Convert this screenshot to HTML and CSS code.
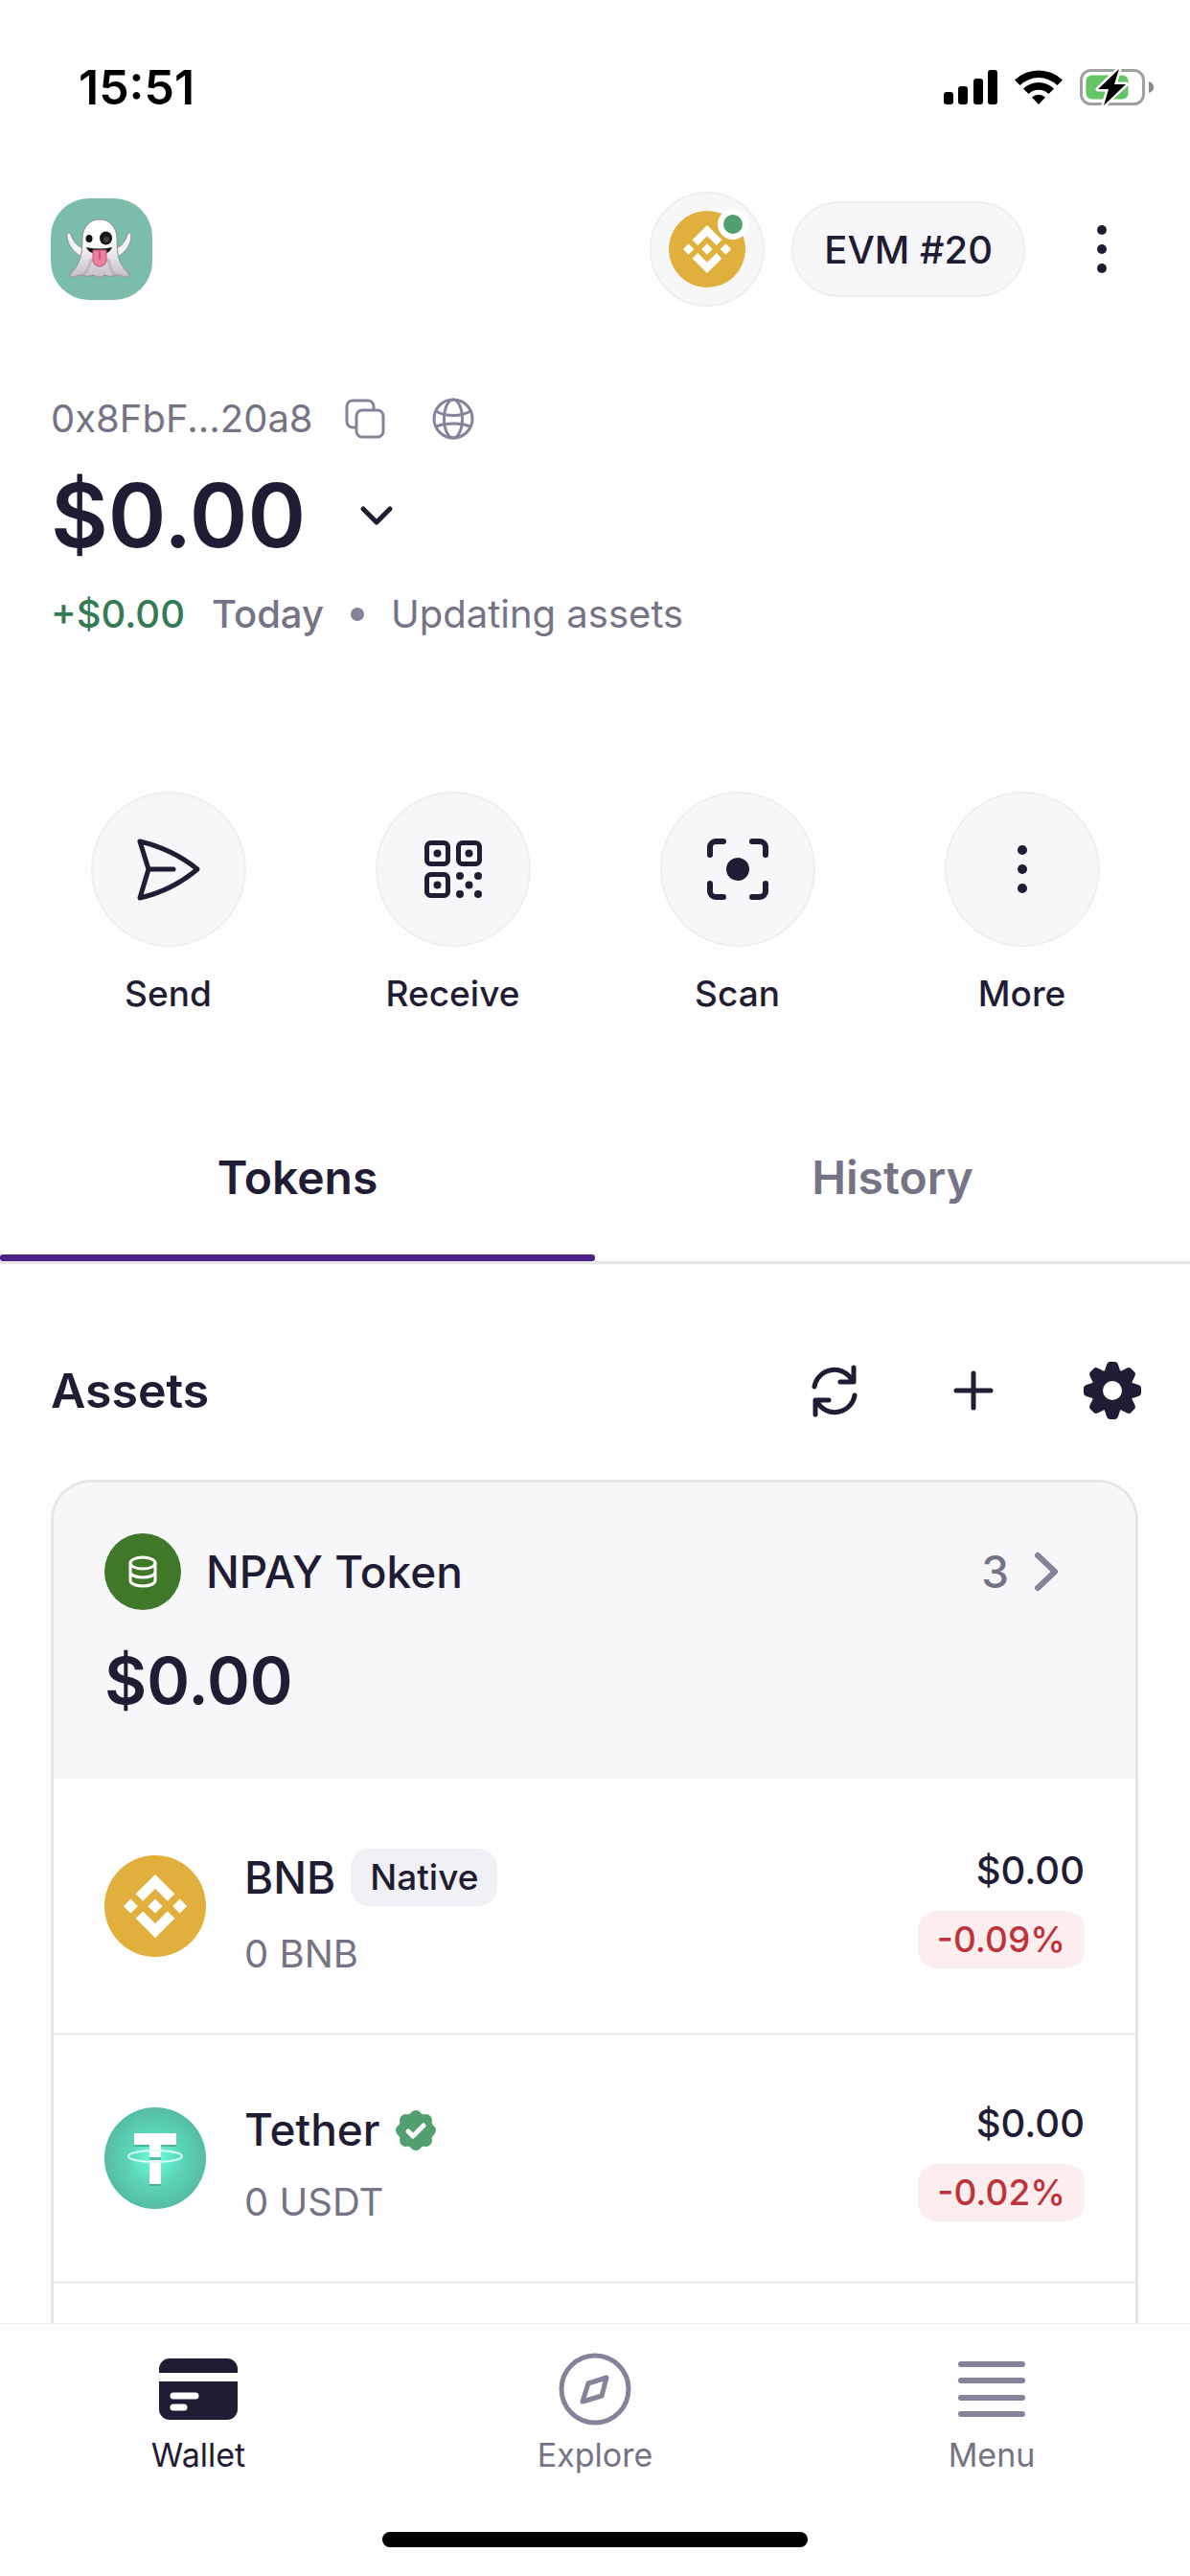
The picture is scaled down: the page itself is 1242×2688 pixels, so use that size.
FILE: index.html
```html
<!DOCTYPE html>
<html lang="en">
  <head>
    <meta charset="UTF-8" />
    <meta name="viewport" content="width=device-width, initial-scale=1.0" />
    <title>Wallet</title>
    <link rel="stylesheet" href="styles.css">
  </head>
  <body>
    <!-- shared symbols -->
    <svg class="sprite" aria-hidden="true">
      <symbol id="bnb" viewBox="0 0 32 32">
        <circle cx="16" cy="16" r="16" fill="#e0af3c" />
        <path fill="#fff" d="M12.116 14.404L16 10.52l3.886 3.886 2.26-2.26L16 6l-6.144 6.144 2.26 2.26zM6 16l2.26-2.26L10.52 16l-2.26 2.26L6 16zm6.116 1.596L16 21.48l3.886-3.886 2.26 2.259L16 26l-6.144-6.144-.003-.003 2.263-2.257zM21.48 16l2.26-2.26L26 16l-2.26 2.26L21.48 16zm-3.188-.002h.002V16L16 18.294l-2.291-2.29-.004-.004.004-.003.401-.402.195-.195L16 13.706l2.293 2.293z" />
      </symbol>
      <symbol id="dots" viewBox="0 0 60 60">
        <circle cx="30" cy="10" r="5" />
        <circle cx="30" cy="30" r="5" />
        <circle cx="30" cy="50" r="5" />
      </symbol>
    </svg>

    <div class="app">
      <div class="status-bar">
        <span class="clock">15:51</span>
        <svg width="220" height="38" viewBox="0 0 220 38" aria-hidden="true">
          <rect x="0" y="24" width="10" height="13" rx="3" />
          <rect x="15" y="18" width="10" height="19" rx="3" />
          <rect x="31" y="10" width="10" height="27" rx="3" />
          <rect x="46" y="1" width="10" height="36" rx="3" />
          <path d="M74 11.5a36 36 0 0 1 50 0l-5.5 5.5a28 28 0 0 0-39 0z" />
          <path d="M83 20.5a23 23 0 0 1 32 0l-5.5 5.5a15 15 0 0 0-21 0z" />
          <path d="M92 29.5a10 10 0 0 1 14 0L99 37z" />
          <rect x="143.5" y="1.5" width="65" height="35" rx="10" fill="none" stroke="#a0a0a0" stroke-width="3" />
          <rect x="148.5" y="6.5" width="44" height="25" rx="6" fill="#65c466" />
          <path d="M214 13c7 2 7 10 0 12z" fill="#8c8c8c" />
          <path d="M183 0L161 21h11l-5 17 23-22h-12z" stroke="#fff" stroke-width="5" paint-order="stroke" stroke-linejoin="round" />
        </svg>
      </div>

      <header class="header">
        <button class="avatar" aria-label="Account">
          <svg width="106" height="106" viewBox="0 0 106 106">
            <defs>
              <linearGradient id="ghost" x1="0" y1="0" x2="0" y2="1">
                <stop offset="0.4" stop-color="#fdfdfd" />
                <stop offset="1" stop-color="#c3bcc4" />
              </linearGradient>
            </defs>
            <g stroke="#8f8d97" stroke-width="1">
              <path fill="#f3f1f5" d="M34 62c-10-5-17-14-17-23 0-4 3-4 4-1 3 8 7 12 13 14zM68 62c10-5 16-14 16-23 0-4-3-4-4-1-3 8-6 12-12 14z" />
              <path fill="url(#ghost)" d="M51 22c11 0 18 9 18 20 0 16 1 25 12 36 2 3-1 5-4 4-5-2-8-3-12-1-4 1-6 0-9-1-3 3-8 3-11 0-4 1-6 2-9 1-4-2-7-1-11 1-3 1-6-1-4-4 10-10 12-20 12-36 0-11 7-20 18-20z" />
            </g>
            <path d="M34 80c5-5 7-11 8-17M67 80c-5-5-6-11-7-17" fill="none" stroke="#aaa2ab" stroke-width="3" opacity="0.5" />
            <ellipse cx="40" cy="42" rx="3.5" ry="4" fill="#111" />
            <ellipse cx="57.5" cy="41.5" rx="6.5" ry="7" fill="#1b1718" />
            <circle cx="58" cy="43" r="3" fill="#454045" />
            <path d="M37 51q14 3 27 0c-2 5-6 7-13 7s-12-2-14-7z" fill="#15100f" />
            <path d="M44 54h14v11a7 6 0 0 1-14 0z" fill="#ee7f9f" stroke="#b5536f" stroke-width="1" />
            <path d="M51 55v9" stroke="#c9577a" stroke-width="2" />
          </svg>
        </button>
        <div class="header-actions">
          <button class="network" aria-label="Network">
            <svg width="80" height="80"><use href="#bnb" /></svg>
            <span class="online"></span>
          </button>
          <button class="account-pill">EVM #20</button>
          <button class="menu-dots" aria-label="Options">
            <svg width="60" height="50" viewBox="0 5 60 50"><use href="#dots" width="60" height="60" /></svg>
          </button>
        </div>
      </header>

      <section class="account">
        <div class="address">
          <span>0x8FbF...20a8</span>
          <button class="icon-button" aria-label="Copy address">
            <svg width="44" height="44" viewBox="0 0 44 44" fill="none" stroke="#85839a" stroke-width="3" stroke-linejoin="round">
              <path d="M12 31H9a6 6 0 0 1-6-6V9a6 6 0 0 1 6-6h16a6 6 0 0 1 6 6v3" />
              <rect x="13" y="13" width="28" height="28" rx="6" />
            </svg>
          </button>
          <button class="icon-button" aria-label="Open explorer">
            <svg width="44" height="44" viewBox="0 0 44 44" fill="none" stroke="#85839a" stroke-width="3">
              <circle cx="22" cy="22" r="20" />
              <ellipse cx="22" cy="22" rx="9.5" ry="20" />
              <path d="M4 14c10 6 26 6 36 0M4 30c10-4 26-4 36 0" />
            </svg>
          </button>
        </div>
        <div class="balance">
          <h1>$0.00</h1>
          <button class="icon-button" aria-label="Balance details">
            <svg width="36" height="24" viewBox="0 0 36 24" fill="none" stroke="#1f1c33" stroke-width="5" stroke-linecap="round" stroke-linejoin="round">
              <path d="M4 5l14 14L32 5" />
            </svg>
          </button>
        </div>
        <div class="change">
          <strong class="gain">+$0.00</strong>
          <strong>Today</strong>
          <span class="bullet"></span>
          <span>Updating assets</span>
        </div>
      </section>

      <div class="actions">
        <button class="action">
          <span class="action-icon">
            <svg width="72" height="72" viewBox="0 0 72 72" fill="none" stroke="#1f1c33" stroke-width="5" stroke-linecap="round" stroke-linejoin="round">
              <path d="M6 7q34 8 60 29q-26 22-60 30l9-30zM15 36h26" />
            </svg>
          </span>
          Send
        </button>
        <button class="action">
          <span class="action-icon">
            <svg width="72" height="72" viewBox="0 0 72 72">
              <g fill="none" stroke="#1f1c33" stroke-width="5">
                <rect x="8.5" y="8.5" width="22" height="22" rx="4" />
                <rect x="41.5" y="8.5" width="22" height="22" rx="4" />
                <rect x="8.5" y="41.5" width="22" height="22" rx="4" />
              </g>
              <g fill="#1f1c33">
                <circle cx="19.5" cy="19.5" r="4" />
                <circle cx="52.5" cy="19.5" r="4" />
                <circle cx="19.5" cy="52.5" r="4" />
                <circle cx="43" cy="43" r="4" />
                <circle cx="62" cy="43" r="4" />
                <circle cx="52.5" cy="52.5" r="4" />
                <circle cx="43" cy="62" r="4" />
                <circle cx="62" cy="62" r="4" />
              </g>
            </svg>
          </span>
          Receive
        </button>
        <button class="action">
          <span class="action-icon">
            <svg width="72" height="72" viewBox="0 0 72 72">
              <path fill="none" stroke="#1f1c33" stroke-width="6" stroke-linecap="round" d="M21 7h-8a6 6 0 0 0-6 6v8M51 7h8a6 6 0 0 1 6 6v8M21 65h-8a6 6 0 0 1-6-6v-8M51 65h8a6 6 0 0 0 6-6v-8" />
              <circle cx="36" cy="36" r="12" fill="#1f1c33" />
            </svg>
          </span>
          Scan
        </button>
        <button class="action">
          <span class="action-icon">
            <svg width="60" height="60" fill="#1f1c33"><use href="#dots" /></svg>
          </span>
          More
        </button>
      </div>

      <div class="tabs" role="tablist">
        <button class="tab active" role="tab" aria-selected="true">Tokens</button>
        <button class="tab" role="tab" aria-selected="false">History</button>
      </div>

      <div class="assets-header">
        <h2>Assets</h2>
        <div class="tools">
          <button class="tool" aria-label="Refresh">
            <svg width="60" height="60" viewBox="0 0 60 60" fill="none" stroke="#1f1c33" stroke-width="5" stroke-linecap="round" stroke-linejoin="round">
              <path d="M9 26a21 21 0 0 1 39-7M50 6v15H36M51 35a21 21 0 0 1-39 7M10 55V40h14" />
            </svg>
          </button>
          <button class="tool" aria-label="Add token">
            <svg width="60" height="60" viewBox="0 0 60 60" stroke="#1f1c33" stroke-width="5" stroke-linecap="round">
              <path d="M30 12v36M12 30h36" />
            </svg>
          </button>
          <button class="tool" aria-label="Asset settings">
            <svg width="60" height="60" viewBox="-30 -30 60 60" fill="#1f1c33">
              <circle r="16" fill="none" stroke="#1f1c33" stroke-width="12" />
              <g id="teeth">
                <path d="M-9-18l3-9q1-3 3-3h6q2 0 3 3l3 9z" />
                <path d="M-9 18l3 9q1 3 3 3h6q2 0 3-3l3-9z" />
                <path d="M-18-9l-9 3q-3 1-3 3v6q0 2 3 3l9 3z" />
                <path d="M18-9l9 3q3 1 3 3v6q0 2-3 3l-9 3z" />
              </g>
              <use href="#teeth" transform="rotate(45)" />
            </svg>
          </button>
        </div>
      </div>

      <main class="card">
        <a class="group" href="#npay">
          <span class="group-top">
            <span class="group-icon">
              <svg width="34" height="38" viewBox="0 0 34 38" fill="none" stroke="#fff" stroke-width="3">
                <ellipse cx="17" cy="10" rx="13" ry="6" />
                <path d="M4 10v18c0 8 26 8 26 0V10M4 19c0 8 26 8 26 0" />
              </svg>
            </span>
            <span class="group-name">NPAY Token</span>
            <span class="group-count">3</span>
            <svg width="30" height="44" viewBox="0 0 30 44" fill="none" stroke="#85839a" stroke-width="6" stroke-linecap="round" stroke-linejoin="round">
              <path d="M5 5l18 17L5 39" />
            </svg>
          </span>
          <span class="group-value">$0.00</span>
        </a>
        <ul class="token-list">
          <li class="token">
            <svg width="106" height="106"><use href="#bnb" /></svg>
            <div class="token-info">
              <div class="token-name">BNB <span class="tag">Native</span></div>
              <div class="token-amount">0 BNB</div>
            </div>
            <div class="token-value">
              <span class="price">$0.00</span>
              <span class="tag loss">-0.09%</span>
            </div>
          </li>
          <li class="token">
            <svg width="106" height="106" viewBox="0 0 106 106">
              <defs>
                <radialGradient id="tether">
                  <stop offset="0" stop-color="#6fffdc" />
                  <stop offset="0.55" stop-color="#5bd3b7" />
                  <stop offset="1" stop-color="#55bda5" />
                </radialGradient>
              </defs>
              <circle cx="53" cy="53" r="53" fill="url(#tether)" />
              <path d="M31 29h44v12H59v41H47V41H31z" fill="#3c9c86" opacity="0.6" />
              <path d="M31 27h44v12H59v13H47V39H31zM47 55h12v25H47z" fill="#fff" />
              <ellipse cx="53" cy="51" rx="28" ry="6" fill="none" stroke="#d9fff5" stroke-width="2" />
            </svg>
            <div class="token-info">
              <div class="token-name">
                Tether
                <svg width="42" height="42" viewBox="-21 -21 42 42" role="img" aria-label="Verified">
                  <g fill="#529f6f">
                    <circle r="18.5" />
                    <circle cy="-14.5" r="6.5" />
                    <circle cy="14.5" r="6.5" />
                    <circle cx="-14.5" r="6.5" />
                    <circle cx="14.5" r="6.5" />
                    <circle cx="10.5" cy="10.5" r="6.5" />
                    <circle cx="-10.5" cy="10.5" r="6.5" />
                    <circle cx="10.5" cy="-10.5" r="6.5" />
                    <circle cx="-10.5" cy="-10.5" r="6.5" />
                  </g>
                  <path d="M-8 1l5 5L8-5" fill="none" stroke="#fff" stroke-width="5" stroke-linecap="round" stroke-linejoin="round" />
                </svg>
              </div>
              <div class="token-amount">0 USDT</div>
            </div>
            <div class="token-value">
              <span class="price">$0.00</span>
              <span class="tag loss">-0.02%</span>
            </div>
          </li>
        </ul>
      </main>

      <footer class="bottom">
        <nav class="bottom-nav">
          <a class="nav-item current" href="#wallet">
            <svg width="90" height="90" viewBox="0 0 90 90">
              <path fill="#1f1c33" d="M4 28v-4a11 11 0 0 1 11-11h60a11 11 0 0 1 11 11v4zM4 37h82v29a11 11 0 0 1-11 11H15A11 11 0 0 1 4 66z" />
              <path d="M19 52h23M19 64h11" stroke="#fff" stroke-width="7" stroke-linecap="round" />
            </svg>
            Wallet
          </a>
          <a class="nav-item" href="#explore">
            <svg width="90" height="90" viewBox="0 0 90 90" fill="none" stroke="#85839a" stroke-width="5" stroke-linejoin="round">
              <circle cx="45" cy="45" r="35" />
              <path d="M57 33l-5 19-20 6 6-19z" />
            </svg>
            Explore
          </a>
          <a class="nav-item" href="#menu">
            <svg width="90" height="90" viewBox="0 0 90 90" fill="none" stroke="#85839a" stroke-width="6" stroke-linecap="round">
              <path d="M13 19h64M13 36h64M13 54h64M13 71h64" />
            </svg>
            Menu
          </a>
        </nav>
        <div class="home-indicator"></div>
      </footer>
    </div>
  </body>
</html>
```

FILE: styles.css
```css
* {
  box-sizing: border-box;
}

body {
  font-family: "Inter", sans-serif;
  font-size: 40px;
  color: #1f1c33;
  background-color: #fefefe;
  margin: 0;
}

button {
  font: inherit;
  color: inherit;
  background: none;
  border: none;
  padding: 0;
  cursor: pointer;
}

a {
  color: inherit;
  text-decoration: none;
}

svg {
  display: block;
  flex-shrink: 0;
}

h1,
h2 {
  margin: 0;
  font-weight: 600;
}

.sprite {
  position: absolute;
  width: 0;
  height: 0;
}

.app {
  height: 100vh;
  display: flex;
  flex-direction: column;
  overflow: hidden;
}

/* Status bar */
.status-bar {
  display: flex;
  justify-content: space-between;
  align-items: center;
  padding: 61px 37px 60px 82px;
  line-height: 60px;
}

.clock {
  font-size: 50px;
  font-weight: 600;
  color: #000;
}

/* Header */
.header {
  display: flex;
  justify-content: space-between;
  align-items: center;
  padding: 19px 40px 0 53px;
}

.avatar {
  background-color: #7cbcab;
  border-radius: 40px;
  overflow: hidden;
}

.header-actions {
  display: flex;
  align-items: center;
  gap: 28px;
}

.network {
  position: relative;
  width: 120px;
  height: 120px;
  display: flex;
  align-items: center;
  justify-content: center;
  background-color: #f7f7fa;
  border: 2px solid #efeff2;
  border-radius: 50%;
}

.online {
  position: absolute;
  top: 16px;
  right: 15px;
  width: 32px;
  height: 32px;
  background-color: #529f6f;
  border: 6px solid #fff;
  border-radius: 50%;
}

.account-pill {
  height: 100px;
  padding: 0 32px;
  background-color: #f7f7fa;
  border: 2px solid #efeff2;
  border-radius: 50px;
  font-weight: 500;
}

.menu-dots {
  width: 104px;
  height: 104px;
  display: flex;
  align-items: center;
  justify-content: center;
  fill: #1f1c33;
}

/* Account */
.account {
  padding: 87px 53px 0;
  line-height: 60px;
  color: #757384;
}

.address {
  display: flex;
  align-items: center;
  gap: 32px;
}

.icon-button + .icon-button {
  margin-left: 16px;
}

.balance {
  display: flex;
  align-items: center;
  gap: 56px;
  margin: 16px 0 18px;
  line-height: 110px;
  color: #1f1c33;
}

.balance h1 {
  font-size: 92px;
}

.change {
  display: flex;
  align-items: center;
  gap: 28px;
}

.change strong {
  font-weight: 500;
}

.change .gain {
  color: #357a56;
}

.bullet {
  width: 14px;
  height: 14px;
  background-color: #85839a;
  border-radius: 50%;
}

/* Actions */
.actions {
  display: grid;
  grid-template-columns: repeat(4, 1fr);
  padding: 155px 27px 88px;
}

.action {
  display: flex;
  flex-direction: column;
  align-items: center;
  gap: 25px;
  font-size: 37px;
  font-weight: 500;
  line-height: 48px;
}

.action-icon {
  width: 162px;
  height: 162px;
  display: flex;
  align-items: center;
  justify-content: center;
  background-color: #f7f7fa;
  border: 2px solid #efeff2;
  border-radius: 50%;
}

/* Tabs */
.tabs {
  display: grid;
  grid-template-columns: 1fr 1fr;
  border-bottom: 3px solid #e6e6e8;
}

.tab {
  font-size: 48px;
  font-weight: 600;
  line-height: 160px;
  color: #757384;
}

.tab::after {
  content: "";
  display: block;
  height: 7px;
  border-radius: 3px;
}

.tab.active {
  color: #1f1c33;
}

.tab.active::after {
  background-color: #4a2085;
}

/* Assets */
.assets-header {
  display: flex;
  justify-content: space-between;
  align-items: center;
  padding: 102px 51px 63px 53px;
}

.assets-header h2 {
  font-size: 50px;
  line-height: 60px;
}

.tools {
  display: flex;
  gap: 85px;
}

.card {
  flex: 1;
  min-height: 0;
  margin: 0 54px 0 53px;
  border: 3px solid #e6e6e8;
  border-bottom: none;
  border-radius: 42px 42px 0 0;
  overflow: hidden;
}

.group {
  display: block;
  padding: 53px 53px 63px;
  background-color: #f7f7fa;
}

.group-top {
  display: flex;
  align-items: center;
  margin-bottom: 33px;
  padding-right: 24px;
  font-size: 46px;
  font-weight: 500;
}

.group-icon {
  width: 80px;
  height: 80px;
  display: flex;
  align-items: center;
  justify-content: center;
  margin-right: 26px;
  background-color: #3f7829;
  border-radius: 50%;
}

.group-name {
  flex: 1;
}

.group-count {
  margin-right: 25px;
  color: #757384;
}

.group-value {
  display: block;
  font-size: 68px;
  font-weight: 600;
  line-height: 80px;
}

.token-list {
  list-style: none;
  margin: 0;
  padding: 0;
}

.token {
  display: flex;
  align-items: center;
  gap: 40px;
  padding: 58px 53px;
  border-bottom: 3px solid #f2f2f4;
}

.token-info {
  flex: 1;
  padding-top: 15px;
}

.token-name {
  display: flex;
  align-items: center;
  gap: 16px;
  margin-bottom: 26px;
  font-size: 46px;
  font-weight: 500;
  line-height: 51px;
}

.token-amount {
  line-height: 48px;
  color: #757384;
}

.token-value {
  display: flex;
  flex-direction: column;
  align-items: flex-end;
  gap: 13px;
}

.price {
  font-weight: 500;
  line-height: 58px;
}

.tag {
  padding: 0 20px;
  background-color: #f1f0f5;
  border-radius: 20px;
  font-size: 37px;
  font-weight: 500;
  line-height: 60px;
}

.tag.loss {
  color: #be3339;
  background-color: #fceeee;
}

/* Bottom navigation */
.bottom {
  background-color: #fefefe;
  border-top: 1px solid #efeff1;
}

.bottom-nav {
  display: grid;
  grid-template-columns: repeat(3, 1fr);
  padding-top: 23px;
}

.nav-item {
  display: flex;
  flex-direction: column;
  align-items: center;
  font-size: 34px;
  line-height: 48px;
  color: #757384;
}

.nav-item.current {
  color: #1f1c33;
}

.home-indicator {
  width: 444px;
  height: 16px;
  margin: 56px auto 30px;
  background-color: #000;
  border-radius: 8px;
}
```
